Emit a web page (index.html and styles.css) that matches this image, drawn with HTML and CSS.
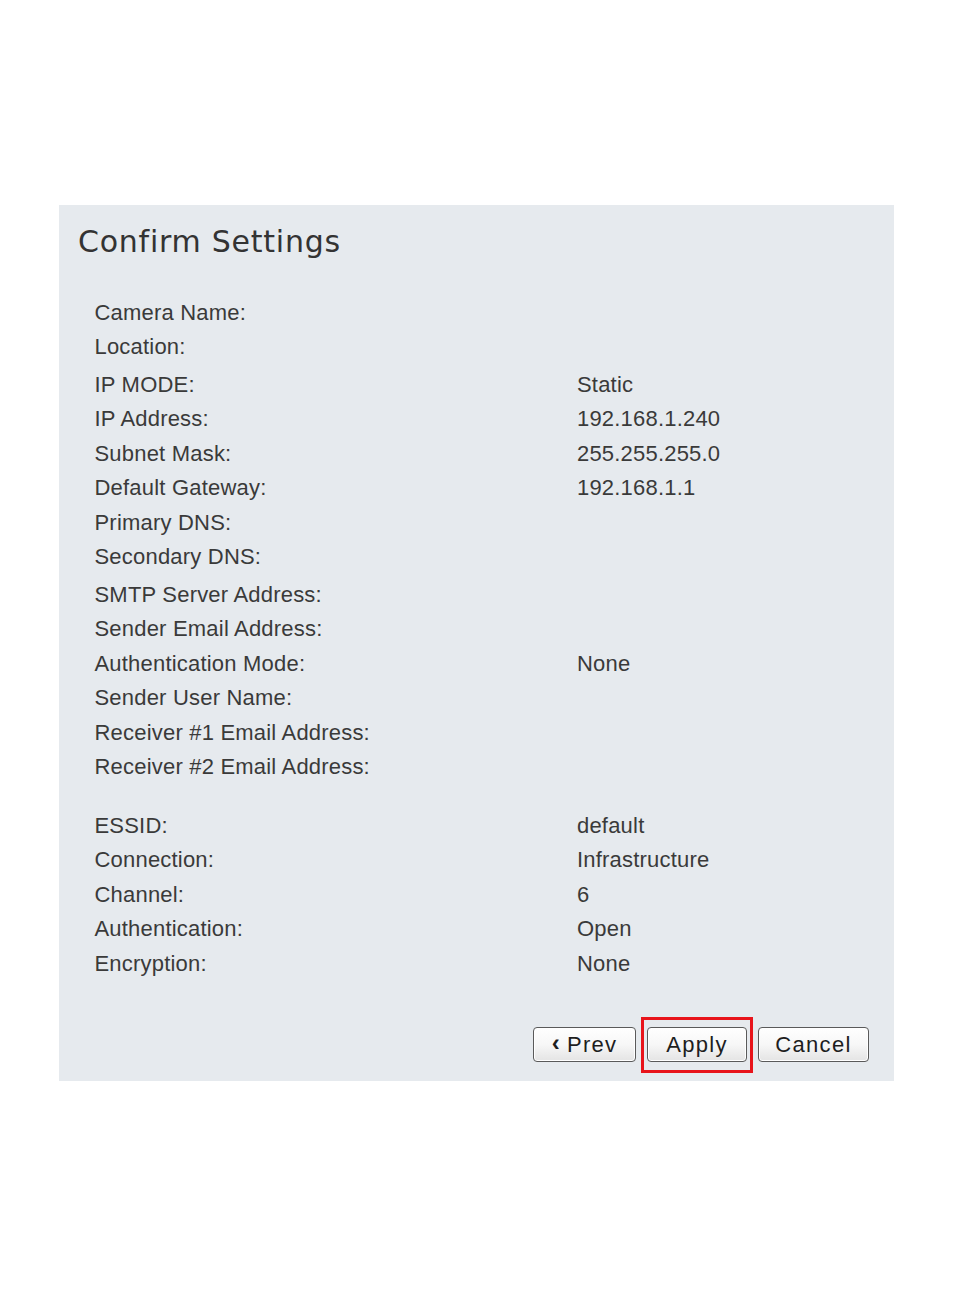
FILE: index.html
```html
<!DOCTYPE html>
<html>
<head>
<meta charset="utf-8">
<link rel="stylesheet" href="styles.css">
</head>
<body>
<div class="panel">
  <h1 class="title">Confirm Settings</h1>
  <div class="group g1">
    <div class="row"><span class="label">Camera Name:</span><span class="value"></span></div>
    <div class="row"><span class="label">Location:</span><span class="value"></span></div>
  </div>
  <div class="group g2">
    <div class="row"><span class="label">IP MODE:</span><span class="value">Static</span></div>
    <div class="row"><span class="label">IP Address:</span><span class="value">192.168.1.240</span></div>
    <div class="row"><span class="label">Subnet Mask:</span><span class="value">255.255.255.0</span></div>
    <div class="row"><span class="label">Default Gateway:</span><span class="value">192.168.1.1</span></div>
    <div class="row"><span class="label">Primary DNS:</span><span class="value"></span></div>
    <div class="row"><span class="label">Secondary DNS:</span><span class="value"></span></div>
  </div>
  <div class="group g3">
    <div class="row"><span class="label">SMTP Server Address:</span><span class="value"></span></div>
    <div class="row"><span class="label">Sender Email Address:</span><span class="value"></span></div>
    <div class="row"><span class="label">Authentication Mode:</span><span class="value">None</span></div>
    <div class="row"><span class="label">Sender User Name:</span><span class="value"></span></div>
    <div class="row"><span class="label">Receiver #1 Email Address:</span><span class="value"></span></div>
    <div class="row"><span class="label">Receiver #2 Email Address:</span><span class="value"></span></div>
  </div>
  <div class="group g4">
    <div class="row"><span class="label">ESSID:</span><span class="value">default</span></div>
    <div class="row"><span class="label">Connection:</span><span class="value">Infrastructure</span></div>
    <div class="row"><span class="label">Channel:</span><span class="value">6</span></div>
    <div class="row"><span class="label">Authentication:</span><span class="value">Open</span></div>
    <div class="row"><span class="label">Encryption:</span><span class="value">None</span></div>
  </div>
  <div class="actions">
    <button class="btn btn-prev"><span class="chev">‹</span>Prev</button>
    <span class="highlight"><button class="btn btn-apply">Apply</button></span>
    <button class="btn btn-cancel">Cancel</button>
  </div>
</div>
</body>
</html>
```
FILE: styles.css
```css
html, body {
  margin: 0;
  padding: 0;
  background: #ffffff;
}
body {
  width: 954px;
  height: 1314px;
  padding-top: 205px;
  padding-left: 59px;
  box-sizing: border-box;
}
.panel {
  width: 835px;
  height: 876px;
  background: #e6eaee;
  box-sizing: border-box;
  padding: 19px 25px 0 35.5px;
  color: #3a3a3a;
  font-family: "Liberation Sans", Arial, sans-serif;
}
.title {
  margin: 0 0 35.9px -16.5px;
  font-family: "DejaVu Sans", Verdana, sans-serif;
  font-weight: normal;
  font-size: 30px;
  line-height: 36px;
  letter-spacing: 0.75px;
  color: #333333;
}
.group {
  display: flex;
  flex-direction: column;
}
.g2, .g3 { margin-top: 3px; }
.g4 { margin-top: 24px; }
.row {
  display: grid;
  grid-template-columns: 482.5px 1fr;
  height: 34.5px;
  font-size: 22px;
  line-height: 34.5px;
  letter-spacing: 0.2px;
  white-space: nowrap;
}
.actions {
  display: flex;
  justify-content: flex-end;
  gap: 11px;
  margin-top: 45.6px;
}
.highlight {
  position: relative;
  display: flex;
}
.highlight::after {
  content: "";
  position: absolute;
  left: -6px;
  right: -6px;
  top: -10px;
  bottom: -11px;
  border: 3px solid #e8141b;
  pointer-events: none;
}
.btn {
  height: 35px;
  box-sizing: border-box;
  border: 1px solid #5a5a5a;
  border-radius: 4px;
  background: linear-gradient(#ffffff 0%, #f7f7f7 50%, #e4e4e4 100%);
  box-shadow: inset 0 0 0 1px #ffffff;
  font-family: "Liberation Sans", Arial, sans-serif;
  font-size: 22px;
  letter-spacing: 1.3px;
  color: #1e1e1e;
  padding: 2px 0 0 0;
  display: flex;
  align-items: center;
  justify-content: center;
}
.btn-prev { width: 103px; }
.btn-apply { width: 100px; }
.btn-cancel { width: 111px; }
.chev {
  font-weight: bold;
  margin-right: 6px;
  font-size: 24px;
  line-height: 1;
  position: relative;
  top: -2px;
}
```
